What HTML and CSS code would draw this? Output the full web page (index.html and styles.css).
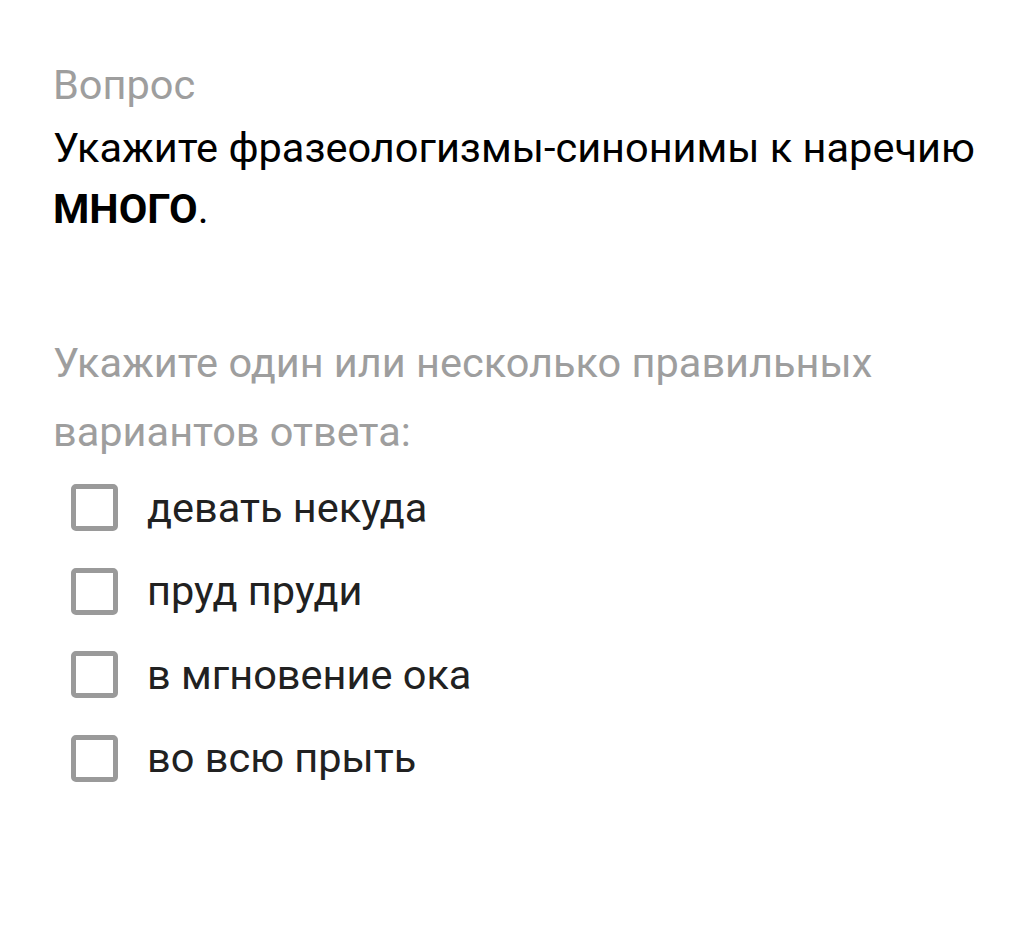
FILE: index.html
```html
<!DOCTYPE html>
<html lang="ru">
<head>
    <meta charset="UTF-8">
    <title>Вопрос</title>
    <link rel="stylesheet" href="styles.css">
</head>
<body>

<div class="question">
    <div class="label">Вопрос</div>
    <p class="text">Укажите фразеологизмы-синонимы к наречию <b>МНОГО</b>.</p>
</div>

<div class="answers">
    <p class="hint">Укажите один или несколько правильных вариантов ответа:</p>

    <label class="option"><span class="box"></span>девать некуда</label>
    <label class="option"><span class="box"></span>пруд пруди</label>
    <label class="option"><span class="box"></span>в мгновение ока</label>
    <label class="option"><span class="box"></span>во всю прыть</label>
</div>

</body>
</html>
```

FILE: styles.css
```css
body {
    font-family: Roboto, "Noto Sans", sans-serif;
    background: #fff;
    margin: 0;
    padding: 60px 30px 0 53px;
}
.label {
    color: #9e9e9e;
    font-size: 41.5px;
    line-height: 50px;
}
.text {
    margin: 7px 0 0;
    color: #000;
    font-size: 41.5px;
    line-height: 61px;
}
.text b {
    font-weight: bold;
}
.answers {
    margin-top: 89px;
}
.hint {
    margin: 0;
    color: #9e9e9e;
    font-size: 41.5px;
    line-height: 69px;
}
.option {
    display: flex;
    align-items: center;
    gap: 29px;
    height: 83.5px;
    margin-left: 18px;
    color: #212121;
    font-size: 41.5px;
    line-height: 44px;
}
.box {
    width: 37px;
    height: 37px;
    border: 5px solid #9a9a9a;
    border-radius: 5px;
}
```
